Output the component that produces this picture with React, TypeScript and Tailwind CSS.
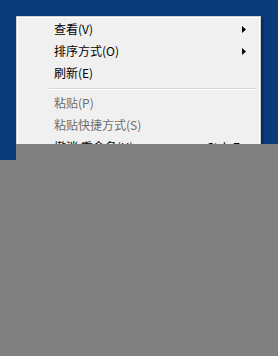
import React from "react";

const Arrow = () => (
  <svg width="4" height="7" viewBox="0 0 4 7" className="block">
    <path d="M0 0 L4 3.5 L0 7 Z" fill="#000" />
  </svg>
);

type Item = { label: string; sub?: boolean; disabled?: boolean; shortcut?: string };

const Row = ({ label, sub, disabled, shortcut }: Item) => (
  <div className="flex h-[22px] items-center pl-[36px] pr-[13px]">
    <span className={`flex-1 text-[12px] leading-none ${disabled ? "text-[#6d6d6d]" : "text-black"}`}>
      {label}
    </span>
    {shortcut && (
      <span className={`mr-[6px] text-[12px] leading-none ${disabled ? "text-[#6d6d6d]" : "text-black"}`}>
        {shortcut}
      </span>
    )}
    {sub && <Arrow />}
  </div>
);

export default function App() {
  return (
    <div
      className="relative h-[356px] w-[278px] overflow-hidden bg-[#0b3b78]"
      style={{ fontFamily: '"Noto Sans CJK SC", "Noto Sans", sans-serif' }}
    >
      <div className="absolute left-[16px] top-[16px] w-[245px] border border-[#cfcfcf] bg-[#f0f0f0] shadow-[2px_2px_2px_rgba(0,0,0,0.35)]">
        <div className="border border-white">
          <Row label="查看(V)" sub />
          <Row label="排序方式(O)" sub />
          <Row label="刷新(E)" />
          <div className="mt-[4px] mb-[2px] ml-[31px] mr-[3px] h-[2px] border-t border-[#d7d7d7] border-b-white border-b" />
          <Row label="粘贴(P)" disabled />
          <Row label="粘贴快捷方式(S)" disabled />
          <Row label="撤消 重命名(U)" shortcut="Ctrl+Z" />
          <Row label="新建(W)" sub />
        </div>
      </div>
      <div className="absolute left-[16px] right-0 top-[144px] h-[16px] bg-[#808080]" />
      <div className="absolute left-0 right-0 top-[160px] bottom-0 bg-[#808080]" />
    </div>
  );
}
